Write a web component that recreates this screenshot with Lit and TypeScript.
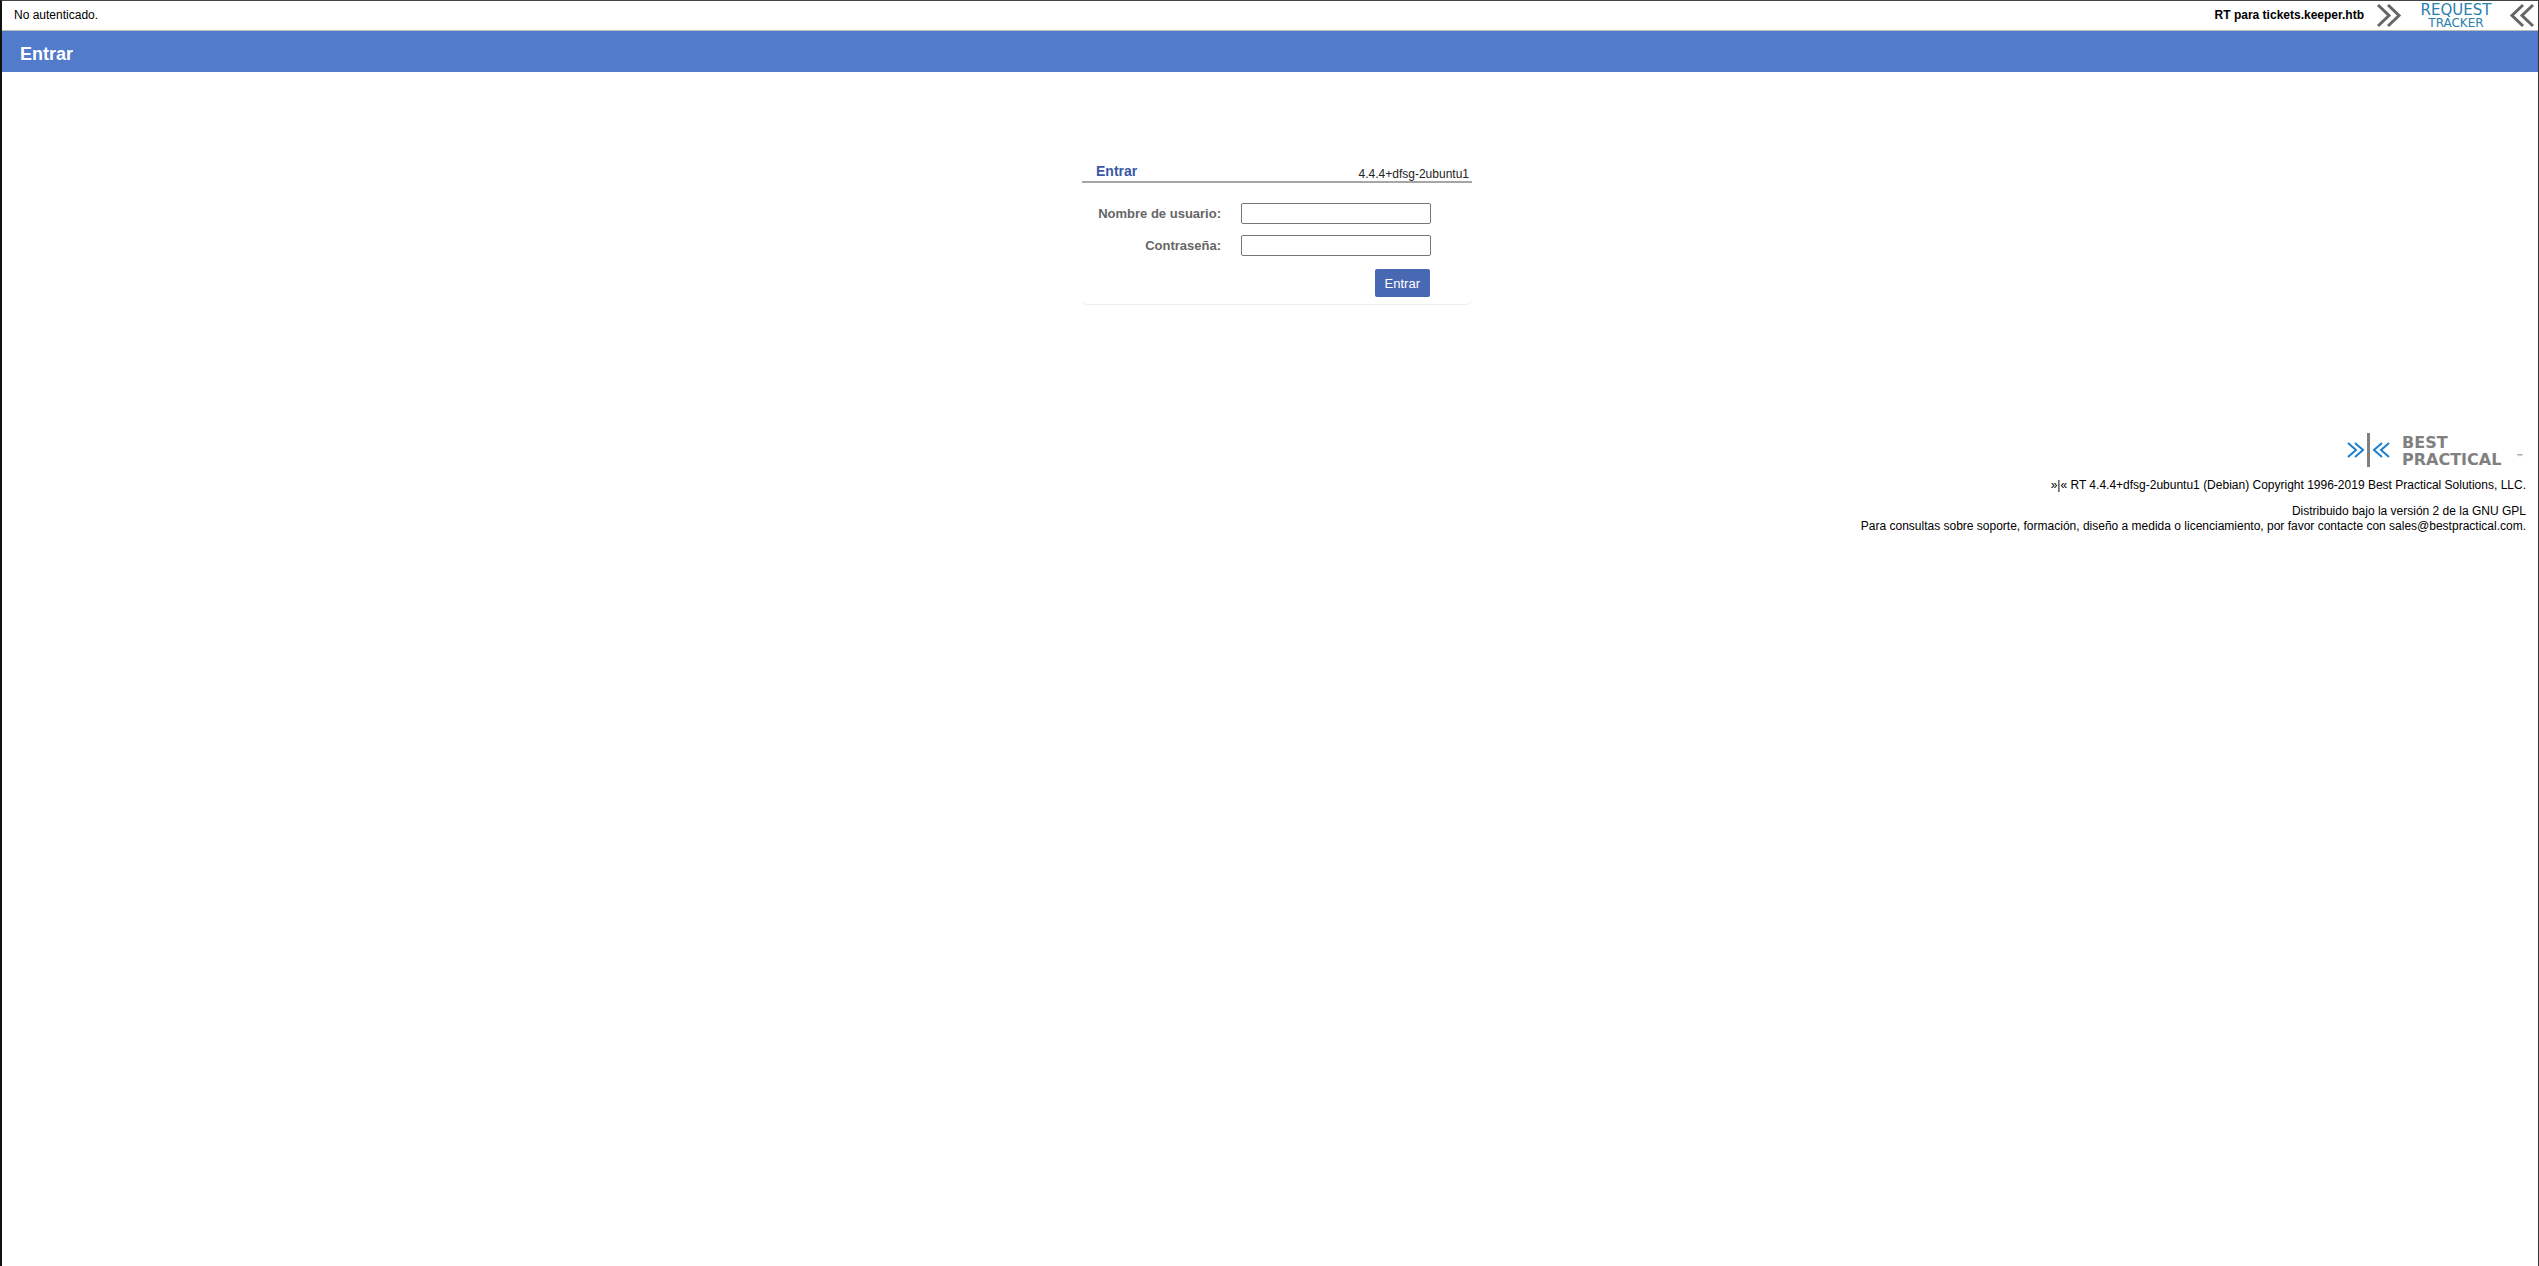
import { LitElement, html, css, svg } from "lit";
import { customElement } from "lit/decorators.js";

@customElement("tracker-logo")
class TrackerLogo extends LitElement {
  static styles = css`
    :host { display: block; }
    svg { display: block; overflow: visible; }
    .chevron { fill: none; stroke: #666; stroke-width: 3; }
    .word { font-family: "DejaVu Sans", sans-serif; font-weight: normal; fill: #2a80ad; text-anchor: middle; }
    .upper { font-size: 15px; }
    .lower { font-size: 12px; }
  `;
  render() {
    return html`<svg width="158" height="26" viewBox="0 0 158 26" role="img" aria-label="Request Tracker">
      ${svg`
        <path class="chevron" d="M1 2 L12 12.500 L1 23 M11 2 L22 12.500 L11 23" />
        <text class="word upper" x="79" y="12">REQUEST</text>
        <text class="word lower" x="79" y="24">TRACKER</text>
        <path class="chevron" d="M146 2 L135 12.500 L146 23 M156 2 L145 12.500 L156 23" />
      `}
    </svg>`;
  }
}

@customElement("company-logo")
class CompanyLogo extends LitElement {
  static styles = css`
    :host { display: block; }
    svg { display: block; overflow: visible; }
    .chevron { fill: none; stroke: #1a7fd0; stroke-width: 2; }
    .bar { fill: #808080; }
    .word { font-family: "DejaVu Sans", sans-serif; font-size: 16px; font-weight: bold; fill: #808080; }
    .mark { font-family: "DejaVu Sans", sans-serif; font-size: 8px; fill: #777; }
  `;
  render() {
    return html`<svg width="180" height="36" viewBox="0 0 180 36" role="img" aria-label="Best Practical">
      ${svg`
        <path class="chevron" d="M2 11 L10 18 L2 25 M9 11 L17 18 L9 25" />
        <rect class="bar" x="21" y="1" width="3" height="34" />
        <path class="chevron" d="M36 11 L28 18 L36 25 M43 11 L35 18 L43 25" />
        <text class="word" x="56" y="16">BEST</text>
        <text class="word" x="56" y="33">PRACTICAL</text>
        <text class="mark" x="170" y="28">™</text>
      `}
    </svg>`;
  }
}

@customElement("login-form")
class LoginForm extends LitElement {
  static styles = css`
    :host { display: block; width: 390px; }
    .box { border-bottom: 1px solid #eee; border-radius: 6px; }
    .title {
      display: flex; align-items: flex-end; justify-content: space-between;
      padding: 0 3px 0 14px; border-bottom: 2px solid #a6a6a6;
    }
    h2 { margin: 0; padding: 1px 0 2px; font-size: 14px; line-height: 16px; color: #3858a5; }
    .version { font-size: 12px; line-height: 14px; color: #222; }
    form {
      display: grid; grid-template-columns: 139px 190px; column-gap: 20px; row-gap: 11px;
      align-items: center; padding: 20px 0 7px;
    }
    label { font-size: 13px; line-height: 16px; font-weight: bold; color: #666; text-align: right; }
    input {
      box-sizing: border-box; width: 190px; height: 21px; margin: 0; padding: 1px 2px;
      border: 1px solid #767676; border-radius: 2px; background: #fff; font: 13px "Liberation Sans", Arial, sans-serif;
    }
    .row { display: contents; }
    button {
      grid-column: 2; justify-self: end; height: 28px; margin: 2px 1px 0 0; padding: 0 10px;
      border: 0; border-radius: 2px; background: #4868b3; color: #fff;
      font: 13px "Liberation Sans", Arial, sans-serif;
    }
  `;
  render() {
    return html`<section class="box">
      <div class="title"><h2>Entrar</h2><span class="version">4.4.4+dfsg-2ubuntu1</span></div>
      <form @submit=${(e: Event) => e.preventDefault()}>
        <div class="row"><label for="user">Nombre de usuario:</label><input id="user" name="user" type="text" /></div>
        <div class="row"><label for="pass">Contraseña:</label><input id="pass" name="pass" type="password" /></div>
        <button type="submit">Entrar</button>
      </form>
    </section>`;
  }
}

@customElement("app-root")
class AppRoot extends LitElement {
  static styles = css`
    :host {
      display: block; box-sizing: border-box; min-height: 100vh; background: #fff; color: #000;
      border: solid #111; border-width: 1px 1px 0 2px; border-top-color: #444; border-right-color: #333;
      font: 12px/15px "Liberation Sans", Arial, sans-serif;
    }
    .top {
      display: flex; align-items: center; justify-content: space-between;
      height: 29px; padding: 0 3px 0 12px; border-bottom: 1px solid #bbb;
    }
    .brand { display: flex; align-items: center; gap: 13px; font-weight: bold; }
    .banner { display: flex; align-items: center; height: 41px; padding: 4px 18px 0; box-sizing: border-box; background: #527bcc; }
    h1 { margin: 0; font-size: 18px; line-height: 22px; color: #fff; }
    main { display: flex; justify-content: center; padding: 90px 0 127px 14px; }
    footer { display: flex; flex-direction: column; align-items: flex-end; padding: 0 12px; }
    footer company-logo { margin-bottom: 10px; }
    p { margin: 0; text-align: right; }
    .copy { margin-bottom: 11px; }
    a { color: inherit; text-decoration: none; }
  `;
  render() {
    return html`
      <header>
        <div class="top">
          <span>No autenticado.</span>
          <div class="brand"><span>RT para tickets.keeper.htb</span><tracker-logo></tracker-logo></div>
        </div>
        <div class="banner"><h1>Entrar</h1></div>
      </header>
      <main><login-form></login-form></main>
      <footer>
        <company-logo></company-logo>
        <p class="copy">»|« RT 4.4.4+dfsg-2ubuntu1 (Debian) Copyright 1996-2019 <a href="#company">Best Practical Solutions, LLC</a>.</p>
        <p>Distribuido bajo la <a href="#license">versión 2 de la GNU GPL</a></p>
        <p>Para consultas sobre soporte, formación, diseño a medida o licenciamiento, por favor contacte con <a href="#contact">sales@bestpractical.com</a>.</p>
      </footer>`;
  }
}
